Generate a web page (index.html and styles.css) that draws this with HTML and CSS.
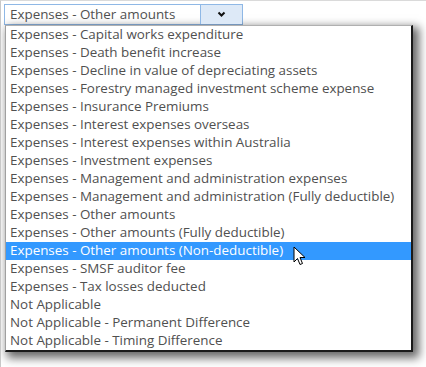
FILE: index.html
```html
<!DOCTYPE html>
<html>
    <head>
        <link rel="stylesheet" href="styles.css">
    </head>
    <body>
        <div class="frame">
            <div class="picker">
                <span class="picked">Expenses - Other amounts</span>
                <span class="arrow">
                    <svg width="9" height="7" viewBox="0 0 9 7"><path d="M1.5 1.5 L4.5 4.5 L7.5 1.5" fill="none" stroke="#111" stroke-width="2"/></svg>
                </span>
            </div>
            <ul class="options">
                <li>Expenses - Capital works expenditure</li>
                <li>Expenses - Death benefit increase</li>
                <li>Expenses - Decline in value of depreciating assets</li>
                <li>Expenses - Forestry managed investment scheme expense</li>
                <li>Expenses - Insurance Premiums</li>
                <li>Expenses - Interest expenses overseas</li>
                <li>Expenses - Interest expenses within Australia</li>
                <li>Expenses - Investment expenses</li>
                <li>Expenses - Management and administration expenses</li>
                <li>Expenses - Management and administration (Fully deductible)</li>
                <li>Expenses - Other amounts</li>
                <li>Expenses - Other amounts (Fully deductible)</li>
                <li class="hover">Expenses - Other amounts (Non-deductible)
                    <svg class="cursor" width="14" height="22" viewBox="0 0 14 22"><path d="M1 1 L1 16 L4.5 12.5 L7 18.5 L9.5 17.5 L7 11.5 L12 11.5 Z" fill="#fff" stroke="#000" stroke-width="1" stroke-linejoin="round"/></svg>
                </li>
                <li>Expenses - SMSF auditor fee</li>
                <li>Expenses - Tax losses deducted</li>
                <li>Not Applicable</li>
                <li>Not Applicable - Permanent Difference</li>
                <li>Not Applicable - Timing Difference</li>
            </ul>
        </div>
    </body>
</html>
```

FILE: styles.css
```css
body {
    margin: 0;
    background: #ffffff;
    font-family: "Open Sans", sans-serif;
}

.frame {
    width: 425px;
    height: 366px;
    border-top: 1px solid #dadada;
    border-left: 1px solid #c8c8c8;
    background: #ffffff;
    overflow: hidden;
}

.picker {
    display: flex;
    width: 237px;
    height: 19px;
    margin: 3px 0 0 3px;
    border: 1px solid #8fb8e6;
    background: #fff;
}

.picked {
    flex: 1;
    font-size: 13.4px;
    line-height: 19px;
    padding-left: 5px;
    color: #505050;
}

.arrow {
    width: 41px;
    display: flex;
    align-items: center;
    justify-content: center;
    background: #dde9f7;
    border-left: 1px solid #8fb8e6;
}

.options {
    list-style: none;
    margin: 0 0 0 4px;
    padding: 0;
    width: 405px;
    height: 324px;
    border-top: 1px solid #b0b0b0;
    border-left: 1px solid #a0a0a0;
    border-right: 2px solid #1a1a1a;
    border-bottom: 2px solid #1a1a1a;
    box-shadow: 4px 4px 9px 2px rgba(0, 0, 0, 0.6);
}

.options li {
    position: relative;
    height: 18px;
    line-height: 17px;
    padding-left: 4px;
    font-size: 13.4px;
    color: #505050;
    white-space: nowrap;
}

.options li.hover {
    background: #3399ff;
    color: #ffffff;
}

.cursor {
    position: absolute;
    left: 287px;
    top: 4px;
}
```
